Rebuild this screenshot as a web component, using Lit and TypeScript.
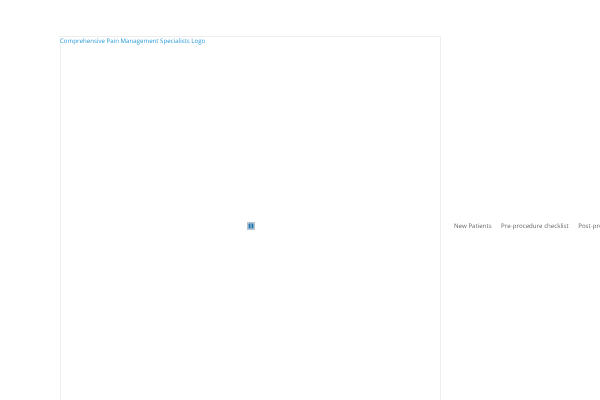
import { LitElement, html, css } from "lit";
import { customElement } from "lit/decorators.js";

@customElement("app-root")
export class AppRoot extends LitElement {
  static styles = css`
    :host {
      display: block;
      width: 600px;
      height: 400px;
      overflow: hidden;
      background: #fff;
      font-family: "Open Sans", sans-serif;
      text-rendering: geometricPrecision;
    }
    .header {
      display: flex;
      align-items: center;
      padding: 36px 0 0 60px;
      width: 800px;
    }
    .logo {
      position: relative;
      display: flex;
      align-items: center;
      justify-content: center;
      box-sizing: border-box;
      width: 381px;
      height: 379px;
      flex: none;
      border: 1px solid #eeeeee;
      border-bottom: 0;
    }
    .alt {
      position: absolute;
      left: -0.7px;
      top: 0;
      font-size: 6.15px;
      line-height: 8px;
      color: #2a9ad8;
      white-space: nowrap;
      will-change: transform;
    }
    .icon { display: block; width: 8px; height: 8px; }
    nav {
      display: flex;
      gap: 9.5px;
      margin-left: 12.5px;
      font-size: 6.15px;
      line-height: 11px;
      color: #666;
      white-space: nowrap;
      will-change: transform;
    }
  `;

  render() {
    return html`
      <div class="header">
        <div class="logo">
          <span class="alt">Comprehensive Pain Management Specialists Logo</span>
          <svg class="icon" viewBox="0 0 8 8">
            <rect x="0.5" y="0.5" width="7" height="7" fill="#dbe7f0" stroke="#b8c4cd" />
            <rect x="1.5" y="1.5" width="5" height="5" fill="#1f6fa8" />
            <rect x="3.5" y="2" width="1" height="4.5" fill="#b9d4e6" />
          </svg>
        </div>
        <nav>
          <span>New Patients</span>
          <span>Pre-procedure checklist</span>
          <span>Post-procedure instructions</span>
        </nav>
      </div>
    `;
  }
}
